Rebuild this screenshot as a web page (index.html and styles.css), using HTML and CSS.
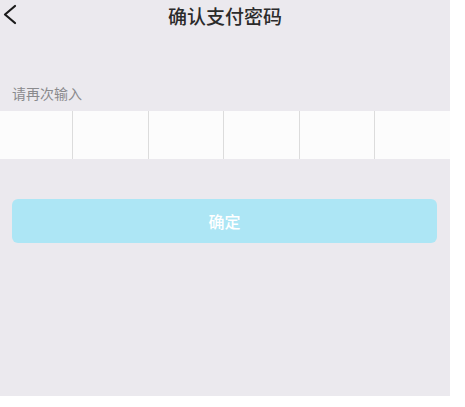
FILE: index.html
```html
<!DOCTYPE html>
<html lang="zh-CN">
<head>
  <meta charset="UTF-8">
  <title>确认支付密码</title>
  <link rel="stylesheet" href="styles.css">
</head>
<body>

<div class="screen">
  <div class="top-bar">
    <span class="back">
      <svg width="20" height="32" viewBox="0 0 20 32">
        <polyline points="15,6 5,14.5 15,23" fill="none" stroke="#1a1a1a" stroke-width="2.2" stroke-linecap="round" stroke-linejoin="round"/>
      </svg>
    </span>
    <h1 class="title">确认支付密码</h1>
    <span></span>
  </div>

  <p class="hint">请再次输入</p>
  <div class="pwd-row">
    <div class="cell"></div>
    <div class="cell"></div>
    <div class="cell"></div>
    <div class="cell"></div>
    <div class="cell"></div>
    <div class="cell"></div>
  </div>

  <button class="btn-ok" type="button">确定</button>
</div>

</body>
</html>
```

FILE: styles.css
```css
body { margin: 0; background: #fff; font-family: "Noto Sans CJK SC", sans-serif; }
.screen { width: 450px; height: 396px; background: #ebe9ee; overflow: hidden; }
.top-bar { display: grid; grid-template-columns: 1fr auto 1fr; align-items: center; height: 32px; }
.back { display: flex; }
.title { margin: 0; font-size: 19px; font-weight: 500; color: #2b2b2b; line-height: 32px; }
.hint { margin: 51px 0 0 12px; font-size: 14px; line-height: 20px; color: #8a8a8d; }
.pwd-row { display: grid; grid-template-columns: 72px repeat(5, 1fr); height: 48px; margin-top: 8px; background: #fcfcfc; }
.cell { border-left: 1px solid #dcdcdc; }
.cell:first-child { border-left: none; }
.btn-ok {
  display: block; width: 425px; height: 44px; margin: 40px 0 0 12px;
  border: none; border-radius: 6px; background: #ade6f5;
  color: #fff; font-family: inherit; font-size: 16px; font-weight: 500;
}
```
